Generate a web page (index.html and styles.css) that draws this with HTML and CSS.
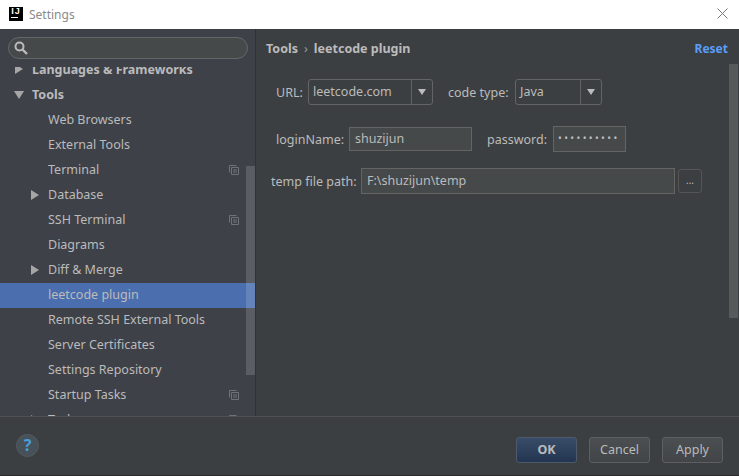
FILE: index.html
```html
<!DOCTYPE html>
<html lang="en">
<head>
    <meta charset="UTF-8">
    <title>Settings</title>
    <link rel="stylesheet" href="styles.css">
</head>
<body>
    <div class="titlebar">
        <div class="app-logo"><span class="app-logo-text">IJ</span><span class="app-logo-line"></span></div>
        <span class="title">Settings</span>
        <svg class="close" width="11" height="11" viewBox="0 0 11 11"><path d="M.5.5l10 10M10.5.5l-10 10" stroke="#777" fill="none"/></svg>
    </div>
    <div class="main">
        <div class="sidebar">
            <div class="search-wrap">
                <div class="search">
                    <svg width="14" height="14" viewBox="0 0 14 14"><circle cx="5.5" cy="5.5" r="4" stroke="#bbb" stroke-width="2" fill="none"/><path d="M8.5 8.5l4.5 4.5" stroke="#bbb" stroke-width="2.4"/></svg>
                </div>
            </div>
            <div class="tree">
                <div class="row row-first"><span class="arrow arrow-cut"></span><b>Languages &amp; Frameworks</b></div>
                <div class="row"><span class="arrow arrow-down"></span><b>Tools</b></div>
                <div class="row child">Web Browsers</div>
                <div class="row child">External Tools</div>
                <div class="row child">Terminal<svg class="copy" width="10" height="10" viewBox="0 0 10 10"><use href="#copy-icon"/></svg></div>
                <div class="row child"><span class="arrow arrow-right"></span>Database</div>
                <div class="row child">SSH Terminal<svg class="copy" width="10" height="10" viewBox="0 0 10 10"><use href="#copy-icon"/></svg></div>
                <div class="row child">Diagrams</div>
                <div class="row child"><span class="arrow arrow-right"></span>Diff &amp; Merge</div>
                <div class="row child selected">leetcode plugin</div>
                <div class="row child">Remote SSH External Tools</div>
                <div class="row child">Server Certificates</div>
                <div class="row child">Settings Repository</div>
                <div class="row child">Startup Tasks<svg class="copy" width="10" height="10" viewBox="0 0 10 10"><use href="#copy-icon"/></svg></div>
                <div class="row child"><span class="arrow arrow-right"></span>Tasks<svg class="copy" width="10" height="10" viewBox="0 0 10 10"><use href="#copy-icon"/></svg></div>
            </div>
            <div class="tree-thumb"></div>
        </div>
        <div class="content">
            <div class="content-head">
                <div class="crumbs"><b>Tools</b><span class="crumb-sep">›</span><b>leetcode plugin</b></div>
                <span class="reset">Reset</span>
            </div>
            <div class="form-row row-url">
                <label class="label-url">URL:</label>
                <div class="combo combo-url"><span class="combo-value">leetcode.com</span><span class="combo-btn"><i></i></span></div>
                <label class="label-type">code type:</label>
                <div class="combo combo-type"><span class="combo-value">Java</span><span class="combo-btn"><i></i></span></div>
            </div>
            <div class="form-row row-login">
                <label class="label-login">loginName:</label>
                <div class="field field-login">shuzijun</div>
                <label class="label-pass">password:</label>
                <div class="field field-pass">••••••••••</div>
            </div>
            <div class="form-row row-path">
                <label class="label-path">temp file path:</label>
                <div class="field field-path">F:\shuzijun\temp</div>
                <div class="browse">...</div>
            </div>
            <div class="content-thumb"></div>
        </div>
    </div>
    <div class="footer">
        <div class="help">?</div>
        <div class="buttons">
            <div class="btn btn-ok">OK</div>
            <div class="btn">Cancel</div>
            <div class="btn">Apply</div>
        </div>
    </div>
    <svg class="defs" width="0" height="0"><symbol id="copy-icon" viewBox="0 0 10 10"><path d="M.5 7.5V.5h7M2.5 2.5h7v7h-7zM4 5h4M4 7h4" stroke="#6f7276" fill="none"/></symbol></svg>
</body>
</html>
```
FILE: styles.css
```css
html, body {
    margin: 0;
    padding: 0;
}
body {
    width: 739px;
    height: 476px;
    overflow: hidden;
    display: flex;
    flex-direction: column;
    background-color: #3c3f41;
    font-family: "Noto Sans", "Open Sans", sans-serif;
    font-size: 12.5px;
    color: #bbbbbb;
}
.defs {
    position: absolute;
}
.titlebar {
    height: 29px;
    flex: none;
    background-color: #fff;
    display: flex;
    align-items: center;
    padding: 0 11px 0 9px;
}
.app-logo {
    width: 14px;
    height: 14px;
    background-color: #000;
    color: #fff;
    position: relative;
    margin-top: -1px;
}
.app-logo-text {
    display: block;
    font-family: "Liberation Sans", sans-serif;
    font-size: 9px;
    font-weight: bold;
    line-height: 9px;
    letter-spacing: 1px;
    text-align: center;
}
.app-logo-line {
    position: absolute;
    left: 2px;
    bottom: 3px;
    width: 7px;
    height: 1px;
    background-color: #fff;
}
.title {
    margin-left: 6px;
    color: #8a8a8a;
    font-size: 12px;
    flex: 1;
}
.close {
    margin-top: -2px;
}
.main {
    flex: 1;
    display: flex;
    min-height: 0;
}
.sidebar {
    width: 255px;
    flex: none;
    background-color: #3e4148;
    border-right: 1px solid #323232;
    display: flex;
    flex-direction: column;
    position: relative;
}
.search-wrap {
    height: 38px;
    flex: none;
    padding: 8px 7px 0 8px;
    box-sizing: border-box;
}
.search {
    height: 22px;
    box-sizing: border-box;
    border: 1px solid #63676a;
    border-radius: 11px;
    background-color: #45494a;
    padding: 3px 0 0 5px;
}
.search svg {
    display: block;
}
.tree {
    flex: 1;
    overflow: hidden;
}
.row {
    height: 25px;
    box-sizing: border-box;
    display: flex;
    align-items: center;
    padding-left: 32px;
    padding-bottom: 2px;
    position: relative;
    white-space: nowrap;
}
.row-first {
    margin-top: -9px;
}
.row b {
    color: #bbbbbb;
}
.child {
    padding-left: 48px;
}
.selected {
    background-color: #4b6eaf;
}
.arrow {
    position: absolute;
    width: 0;
    height: 0;
    border-style: solid;
    border-color: transparent;
}
.arrow-down {
    left: 14px;
    top: 8px;
    border-width: 8px 5px 0 5px;
    border-top-color: #a6a6a6;
}
.arrow-right {
    left: 31px;
    top: 7px;
    border-width: 5px 0 5px 8px;
    border-left-color: #a6a6a6;
}
.arrow-cut {
    left: 15px;
    top: 6px;
    border-width: 5px 0 5px 8px;
    border-left-color: #a6a6a6;
}
.copy {
    position: absolute;
    left: 229px;
    top: 7px;
}
.tree-thumb {
    position: absolute;
    left: 246px;
    top: 137px;
    width: 9px;
    height: 209px;
    background-color: rgba(255, 255, 255, 0.15);
}
.content {
    flex: 1;
    position: relative;
    padding-left: 10px;
}
.content-head {
    display: flex;
    justify-content: space-between;
    align-items: center;
    height: 20px;
    padding: 9px 11px 0 0;
}
.crumb-sep {
    margin: 0 6px;
    color: #9a9a9a;
}
.reset {
    color: #589df6;
    font-weight: bold;
    font-size: 12px;
}
.form-row {
    display: flex;
    align-items: center;
    height: 26px;
}
.row-url {
    margin-top: 21px;
    padding-left: 10px;
}
.row-login {
    margin-top: 21px;
    padding-left: 10px;
}
.row-path {
    margin-top: 16px;
    padding-left: 5px;
}
.label-url {
    width: 32px;
}
.label-type {
    margin-left: 15px;
    width: 67px;
}
.label-login {
    width: 73px;
}
.label-pass {
    margin-left: 15px;
    width: 66px;
}
.label-path {
    width: 90px;
}
.combo {
    height: 26px;
    box-sizing: border-box;
    border: 1px solid #646464;
    border-radius: 3px;
    display: flex;
}
.combo-url {
    width: 125px;
}
.combo-type {
    width: 87px;
}
.combo-value {
    flex: 1;
    padding-left: 4px;
    line-height: 23px;
}
.combo-btn {
    width: 20px;
    border-left: 1px solid #646464;
    display: flex;
    align-items: center;
    justify-content: center;
}
.combo-btn i {
    width: 0;
    height: 0;
    border-style: solid;
    border-color: transparent;
    border-width: 6px 4px 0 4px;
    border-top-color: #bbbbbb;
}
.field {
    height: 26px;
    box-sizing: border-box;
    border: 1px solid #646464;
    background-color: #45494a;
    line-height: 23px;
    padding-left: 5px;
}
.field-login {
    width: 123px;
    height: 24px;
    line-height: 21px;
}
.field-pass {
    width: 73px;
    font-size: 10px;
    letter-spacing: 2.4px;
    padding-left: 4px;
    white-space: nowrap;
    overflow: hidden;
}
.field-path {
    width: 314px;
}
.browse {
    width: 24px;
    height: 24px;
    box-sizing: border-box;
    border: 1px solid #555;
    border-radius: 3px;
    margin-left: 3px;
    text-align: center;
    line-height: 20px;
    font-size: 10px;
}
.content-thumb {
    position: absolute;
    left: 473px;
    top: 35px;
    width: 9px;
    height: 254px;
    background-color: rgba(255, 255, 255, 0.14);
}
.footer {
    height: 60px;
    flex: none;
    box-sizing: border-box;
    border-top: 1px solid #515151;
    border-bottom: 1px solid #2b2b2b;
    display: flex;
    justify-content: space-between;
    align-items: flex-start;
    padding: 20px 16px 0 16px;
}
.help {
    width: 23px;
    height: 23px;
    box-sizing: border-box;
    border-radius: 50%;
    border: 1px solid #555a5d;
    background-color: #465159;
    color: #4a9fd8;
    font-weight: bold;
    font-size: 16px;
    line-height: 21px;
    text-align: center;
    margin-top: -3px;
}
.buttons {
    display: flex;
    gap: 12px;
}
.btn {
    width: 61px;
    height: 26px;
    box-sizing: border-box;
    border: 1px solid #5e6060;
    border-radius: 3px;
    background: linear-gradient(#4b4f51, #414547);
    line-height: 23px;
    text-align: center;
}
.btn-ok {
    background: linear-gradient(#384c68, #233551);
    border-color: #4c5a6b;
    font-weight: bold;
}
```
